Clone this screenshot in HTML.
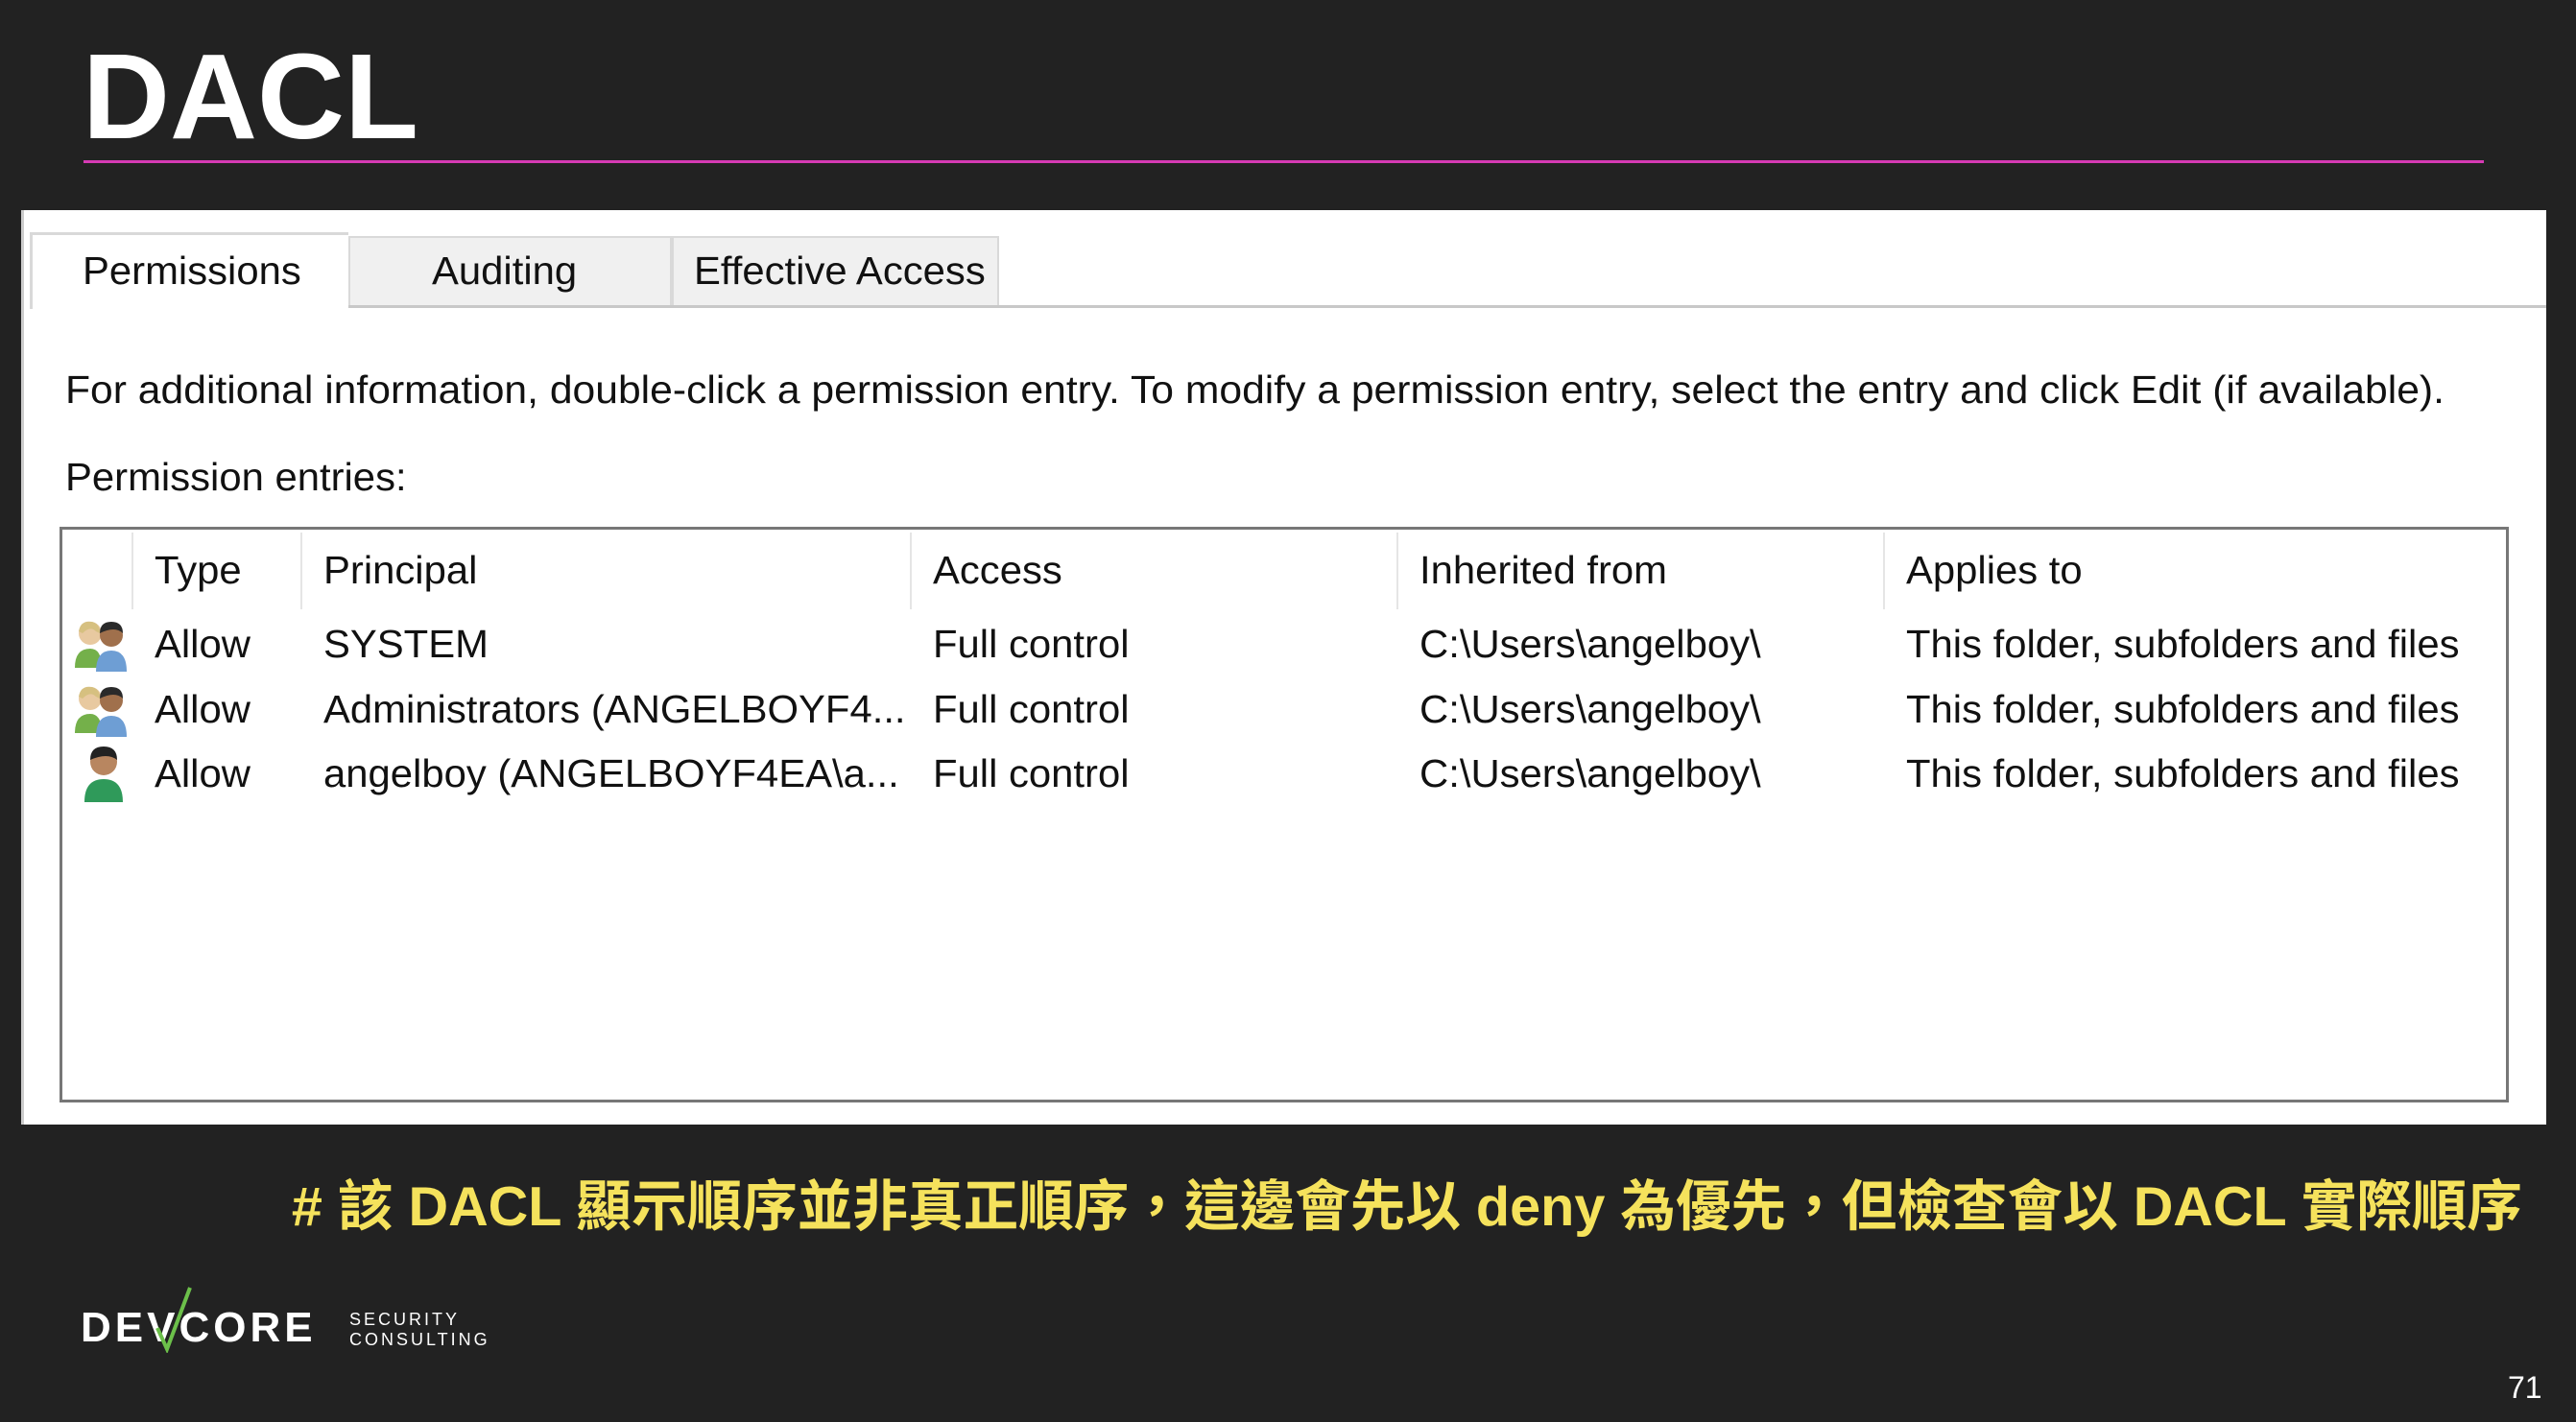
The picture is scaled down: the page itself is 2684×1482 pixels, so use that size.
<!DOCTYPE html>
<html><head><meta charset="utf-8"><style>
html,body{margin:0;padding:0}
body{width:2684px;height:1482px;background:#222;position:relative;overflow:hidden;font-family:"Liberation Sans",sans-serif}
.abs{position:absolute;white-space:nowrap}
.t{display:inline-block;transform:scaleX(1.02);transform-origin:left center}
.d{font-size:41px;color:#111;line-height:1}
</style></head><body>
<div class="abs" style="left:86px;top:32px;font-size:126px;font-weight:bold;color:#fff;line-height:1.1">DACL</div>
<div class="abs" style="left:87px;top:167px;width:2501px;height:3px;background:#d63ab4"></div>

<div class="abs" style="left:22px;top:219px;width:2631px;height:953px;background:#fff;border-left:3px solid #ccc;box-sizing:border-box"></div>
<!-- tabs -->
<div class="abs" style="left:363px;top:246px;width:337px;height:74px;background:#f0f0f0;border:2px solid #d9d9d9;box-sizing:border-box"></div>
<div class="abs" style="left:700px;top:246px;width:341px;height:74px;background:#f0f0f0;border:2px solid #d9d9d9;box-sizing:border-box"></div>
<div class="abs" style="left:363px;top:318px;width:2290px;height:3px;background:#c8c8c8"></div>
<div class="abs" style="left:31px;top:242px;width:332px;height:3px;background:#d9d9d9"></div>
<div class="abs" style="left:31px;top:242px;width:3px;height:80px;background:#d9d9d9"></div>
<div class="abs d" style="left:86px;top:262px"><span class="t">Permissions</span></div>
<div class="abs d" style="left:450px;top:262px"><span class="t">Auditing</span></div>
<div class="abs d" style="left:723px;top:262px"><span class="t">Effective Access</span></div>

<div class="abs d" style="left:68px;top:386px"><span class="t" style="transform:scaleX(1.04)">For additional information, double-click a permission entry. To modify a permission entry, select the entry and click Edit (if available).</span></div>
<div class="abs d" style="left:68px;top:477px"><span class="t">Permission entries:</span></div>

<div class="abs" style="left:62px;top:549px;width:2552px;height:600px;border:3px solid #777;box-sizing:border-box;background:#fff"></div>
<div class="abs" style="left:137px;top:555px;width:2px;height:80px;background:#e5e5e5"></div>
<div class="abs" style="left:313px;top:555px;width:2px;height:80px;background:#e5e5e5"></div>
<div class="abs" style="left:948px;top:555px;width:2px;height:80px;background:#e5e5e5"></div>
<div class="abs" style="left:1455px;top:555px;width:2px;height:80px;background:#e5e5e5"></div>
<div class="abs" style="left:1962px;top:555px;width:2px;height:80px;background:#e5e5e5"></div>

<div class="abs d" style="left:161px;top:574px"><span class="t">Type</span></div>
<div class="abs d" style="left:337px;top:574px"><span class="t">Principal</span></div>
<div class="abs d" style="left:972px;top:574px"><span class="t">Access</span></div>
<div class="abs d" style="left:1479px;top:574px"><span class="t">Inherited from</span></div>
<div class="abs d" style="left:1986px;top:574px"><span class="t">Applies to</span></div>

<!-- icons -->
<svg class="abs" style="left:76px;top:642px" width="60" height="60" viewBox="0 0 30 30">
<circle cx="9" cy="9" r="6" fill="#e8c9a0"/><path d="M3 8 Q4 2 10 3 Q14 4 14 9 L12 8 Q9 5 5 9Z" fill="#d6c080"/><path d="M1 27 Q1 17 9 17 Q15 17 15 27Z" fill="#74b04a"/>
<circle cx="20" cy="10" r="6" fill="#a0704c"/><path d="M14 9 Q14 3 20 3 Q26 3 26 9 Q22 5 14 9Z" fill="#2a2a2a"/><path d="M12 29 Q12 18 20 18 Q28 18 28 29Z" fill="#6e9ed4"/></svg>
<svg class="abs" style="left:76px;top:710px" width="60" height="60" viewBox="0 0 30 30">
<circle cx="9" cy="9" r="6" fill="#e8c9a0"/><path d="M3 8 Q4 2 10 3 Q14 4 14 9 L12 8 Q9 5 5 9Z" fill="#d6c080"/><path d="M1 27 Q1 17 9 17 Q15 17 15 27Z" fill="#74b04a"/>
<circle cx="20" cy="10" r="6" fill="#a0704c"/><path d="M14 9 Q14 3 20 3 Q26 3 26 9 Q22 5 14 9Z" fill="#2a2a2a"/><path d="M12 29 Q12 18 20 18 Q28 18 28 29Z" fill="#6e9ed4"/></svg>
<svg class="abs" style="left:80px;top:774px" width="56" height="64" viewBox="0 0 28 32">
<circle cx="14" cy="10" r="7" fill="#b88660"/><path d="M7 9 Q7 2 14 2 Q21 2 21 9 Q16 5 7 9Z" fill="#222"/><path d="M4 31 Q4 19 14 19 Q24 19 24 31Z" fill="#2f9a5a"/></svg>

<div class="abs d" style="left:161px;top:651px"><span class="t">Allow</span></div>
<div class="abs d" style="left:337px;top:651px"><span class="t">SYSTEM</span></div>
<div class="abs d" style="left:972px;top:651px"><span class="t">Full control</span></div>
<div class="abs d" style="left:1479px;top:651px"><span class="t">C:\Users\angelboy\</span></div>
<div class="abs d" style="left:1986px;top:651px"><span class="t">This folder, subfolders and files</span></div>

<div class="abs d" style="left:161px;top:719px"><span class="t">Allow</span></div>
<div class="abs d" style="left:337px;top:719px"><span class="t">Administrators (ANGELBOYF4...</span></div>
<div class="abs d" style="left:972px;top:719px"><span class="t">Full control</span></div>
<div class="abs d" style="left:1479px;top:719px"><span class="t">C:\Users\angelboy\</span></div>
<div class="abs d" style="left:1986px;top:719px"><span class="t">This folder, subfolders and files</span></div>

<div class="abs d" style="left:161px;top:786px"><span class="t">Allow</span></div>
<div class="abs d" style="left:337px;top:786px"><span class="t">angelboy (ANGELBOYF4EA\a...</span></div>
<div class="abs d" style="left:972px;top:786px"><span class="t">Full control</span></div>
<div class="abs d" style="left:1479px;top:786px"><span class="t">C:\Users\angelboy\</span></div>
<div class="abs d" style="left:1986px;top:786px"><span class="t">This folder, subfolders and files</span></div>

<div class="abs" style="right:56px;top:1224px;font-size:57.6px;font-weight:bold;color:#f5e25c;font-family:'Liberation Sans','Noto Sans CJK TC',sans-serif;line-height:1.2">
# 該 DACL 顯示順序並非真正順序，這邊會先以 deny 為優先，但檢查會以 DACL 實際順序</div>

<div class="abs" style="left:84px;top:1362px;font-size:44px;color:#fff;letter-spacing:4px;line-height:1;font-weight:bold">DE<span style="color:#fff">V</span>CORE</div>
<svg class="abs" style="left:158px;top:1340px" width="50" height="70"><path d="M6 44 L16 66 L40 2" stroke="#6cc04a" stroke-width="4" fill="none"/></svg>
<div class="abs" style="left:364px;top:1365px;font-size:18px;color:#fff;letter-spacing:3px;line-height:1.15">SECURITY<br>CONSULTING</div>
<div class="abs" style="left:2613px;top:1428px;font-size:32px;color:#fff">71</div>
</body></html>
